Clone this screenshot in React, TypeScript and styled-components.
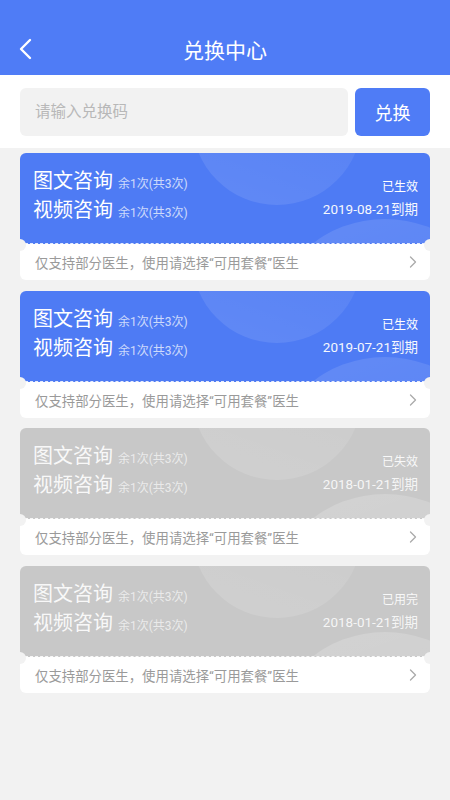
import styled, { createGlobalStyle, css } from 'styled-components';

const GlobalStyle = createGlobalStyle`
    * {
        box-sizing: border-box;
    }
    body {
        margin: 0;
        background: #f2f2f2;
        font-family: Roboto, "Noto Sans CJK SC", sans-serif;
    }
`;

const Page = styled.div`
    width: 450px;
    min-height: 800px;
    background: #f2f2f2;
`;

const Header = styled.header`
    height: 75px;
    padding-top: 22px;
    background: #4f7cf6;
    display: grid;
    grid-template-columns: 70px 1fr 70px;
    align-items: center;
`;

const BackButton = styled.button`
    border: none;
    background: none;
    padding: 0 0 0 18px;
    height: 50px;
    display: flex;
    align-items: center;
    cursor: pointer;
`;

const Title = styled.h1`
    margin: 0;
    text-align: center;
    color: #fff;
    font-size: 21px;
    font-weight: 400;
    line-height: 50px;
    padding-top: 4px;
`;

const SearchBar = styled.div`
    background: #fff;
    padding: 13px 20px 12px;
    display: flex;
    gap: 7px;
`;

const CodeInput = styled.input`
    flex: 1;
    height: 48px;
    border: none;
    border-radius: 6px;
    background: #f2f2f2;
    padding: 0 15px;
    font-family: inherit;
    font-size: 15.5px;
    color: #333;
    outline: none;

    &::placeholder {
        color: #b8b8b8;
    }
`;

const RedeemButton = styled.button`
    width: 75px;
    height: 48px;
    border: none;
    border-radius: 6px;
    background: #4f7cf6;
    color: #fff;
    font-family: inherit;
    font-size: 18px;
    cursor: pointer;
`;

const List = styled.div`
    padding: 5px 20px;
    display: flex;
    flex-direction: column;
    gap: 10.7px;
`;

const Card = styled.div`
    position: relative;

    &::before,
    &::after {
        content: '';
        position: absolute;
        top: 86px;
        width: 12px;
        height: 12px;
        border-radius: 50%;
        background: #f2f2f2;
        z-index: 2;
    }
    &::before {
        left: -6px;
    }
    &::after {
        right: -6px;
    }
`;

const CardTop = styled.div<{ $inactive?: boolean }>`
    position: relative;
    overflow: hidden;
    height: 91px;
    padding: 14px 12px 0 13px;
    border-radius: 6px 6px 0 0;
    border-bottom: 1px dashed rgba(255, 255, 255, 0.85);
    display: flex;
    justify-content: space-between;
    background: ${(p) => (p.$inactive ? '#c8c8c8' : '#4e7bf4')};
    color: ${(p) => (p.$inactive ? 'rgba(255, 255, 255, 0.9)' : '#fff')};

    &::before {
        content: '';
        position: absolute;
        left: 172px;
        top: -118px;
        width: 170px;
        height: 170px;
        border-radius: 50%;
        ${(p) =>
            p.$inactive
                ? css`
                      background: linear-gradient(200deg, rgba(255, 255, 255, 0.03), rgba(255, 255, 255, 0.15));
                  `
                : css`
                      background: linear-gradient(200deg, rgba(255, 255, 255, 0.02), rgba(255, 255, 255, 0.11));
                  `}
    }

    &::after {
        content: '';
        position: absolute;
        left: 255px;
        top: 66px;
        width: 220px;
        height: 200px;
        border-radius: 50%;
        ${(p) =>
            p.$inactive
                ? css`
                      background: linear-gradient(160deg, rgba(255, 255, 255, 0.2), rgba(255, 255, 255, 0.05));
                  `
                : css`
                      background: linear-gradient(160deg, rgba(255, 255, 255, 0.12), rgba(255, 255, 255, 0.02));
                  `}
    }
`;

const Services = styled.div`
    position: relative;
    z-index: 1;
    display: flex;
    flex-direction: column;
`;

const ServiceRow = styled.div`
    display: flex;
    align-items: baseline;
    gap: 5px;
    height: 29px;
`;

const ServiceName = styled.span`
    font-size: 20px;
    line-height: 29px;
`;

const Remaining = styled.span`
    font-size: 12px;
    opacity: 0.72;
`;

const Status = styled.div`
    position: relative;
    z-index: 1;
    padding-top: 11px;
    display: flex;
    flex-direction: column;
    align-items: flex-end;
    gap: 4px;
`;

const StatusText = styled.span`
    font-size: 12px;
    line-height: 18px;
`;

const Expire = styled.span`
    font-size: 13.5px;
    line-height: 18px;
    opacity: 0.95;
`;

const CardBottom = styled.div`
    height: 36px;
    background: #fff;
    border-radius: 0 0 6px 6px;
    padding: 0 13px 0 15px;
    display: flex;
    align-items: center;
    justify-content: space-between;
    font-size: 13.4px;
    color: #9a9a9a;
`;

type Coupon = {
    status: string;
    expire: string;
    inactive?: boolean;
};

const coupons: Coupon[] = [
    { status: '已生效', expire: '2019-08-21到期' },
    { status: '已生效', expire: '2019-07-21到期' },
    { status: '已失效', expire: '2018-01-21到期', inactive: true },
    { status: '已用完', expire: '2018-01-21到期', inactive: true },
];

const services = ['图文咨询', '视频咨询'];

const App = () => {
    return (
        <Page>
            <GlobalStyle />
            <Header>
                <BackButton aria-label="返回">
                    <svg width="14" height="22" viewBox="0 0 14 22">
                        <polyline points="12,2 3,11 12,20" fill="none" stroke="#fff" strokeWidth="2.4" strokeLinecap="round" strokeLinejoin="round" />
                    </svg>
                </BackButton>
                <Title>兑换中心</Title>
                <div />
            </Header>
            <SearchBar>
                <CodeInput placeholder="请输入兑换码" />
                <RedeemButton>兑换</RedeemButton>
            </SearchBar>
            <List>
                {coupons.map((c, i) => (
                    <Card key={i}>
                        <CardTop $inactive={c.inactive}>
                            <Services>
                                {services.map((s) => (
                                    <ServiceRow key={s}>
                                        <ServiceName>{s}</ServiceName>
                                        <Remaining>余1次(共3次)</Remaining>
                                    </ServiceRow>
                                ))}
                            </Services>
                            <Status>
                                <StatusText>{c.status}</StatusText>
                                <Expire>{c.expire}</Expire>
                            </Status>
                        </CardTop>
                        <CardBottom>
                            <span>仅支持部分医生，使用请选择“可用套餐”医生</span>
                            <svg width="8" height="12" viewBox="0 0 8 12">
                                <polyline points="1.5,1 6.5,6 1.5,11" fill="none" stroke="#aaa" strokeWidth="1.3" strokeLinecap="round" strokeLinejoin="round" />
                            </svg>
                        </CardBottom>
                    </Card>
                ))}
            </List>
        </Page>
    );
};

export default App;
